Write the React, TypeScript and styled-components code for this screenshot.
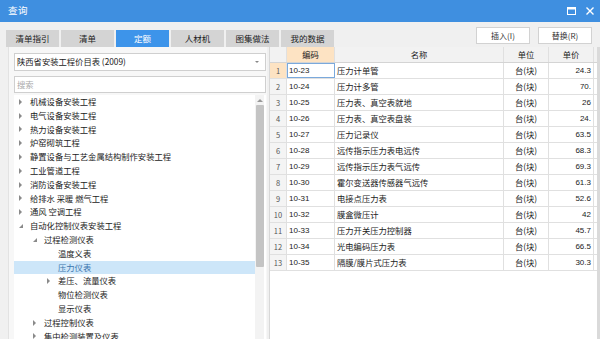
import * as React from 'react';
import styled, { createGlobalStyle } from 'styled-components';

const GlobalStyle = createGlobalStyle`
  html, body { margin: 0; padding: 0; background: #f0f0f0; }
  body {
    font-family: "Noto Sans CJK SC", "Liberation Sans", sans-serif;
    line-height: 1.2;
  }
`;

const tabs = ['清单指引', '清单', '定额', '人材机', '图集做法', '我的数据'];

type TreeItem = { label: string; level: number; arrow?: 'open' | 'closed'; selected?: boolean };

const tree: TreeItem[] = [
  { label: '机械设备安装工程', level: 0, arrow: 'closed' },
  { label: '电气设备安装工程', level: 0, arrow: 'closed' },
  { label: '热力设备安装工程', level: 0, arrow: 'closed' },
  { label: '炉窑砌筑工程', level: 0, arrow: 'closed' },
  { label: '静置设备与工艺金属结构制作安装工程', level: 0, arrow: 'closed' },
  { label: '工业管道工程', level: 0, arrow: 'closed' },
  { label: '消防设备安装工程', level: 0, arrow: 'closed' },
  { label: '给排水 采暖 燃气工程', level: 0, arrow: 'closed' },
  { label: '通风 空调工程', level: 0, arrow: 'closed' },
  { label: '自动化控制仪表安装工程', level: 0, arrow: 'open' },
  { label: '过程检测仪表', level: 1, arrow: 'open' },
  { label: '温度义表', level: 2 },
  { label: '压力仪表', level: 2, selected: true },
  { label: '差压、流量仪表', level: 2, arrow: 'closed' },
  { label: '物位检测仪表', level: 2 },
  { label: '显示仪表', level: 2 },
  { label: '过程控制仪表', level: 1, arrow: 'closed' },
  { label: '集中检测装置及仪表', level: 1, arrow: 'closed' },
];

const rows = [
  ['10-23', '压力计单管', '24.3'],
  ['10-24', '压力计多管', '70.'],
  ['10-25', '压力表、真空表就地', '26'],
  ['10-26', '压力表、真空表盘装', '24.'],
  ['10-27', '压力记录仪', '63.5'],
  ['10-28', '远传指示压力表电远传', '68.3'],
  ['10-29', '远传指示压力表气远传', '69.3'],
  ['10-30', '霍尔变送器传感器气远传', '61.3'],
  ['10-31', '电接点压力表', '52.6'],
  ['10-32', '膜盒微压计', '42'],
  ['10-33', '压力开关压力控制器', '45.7'],
  ['10-34', '光电编码压力表', '66.5'],
  ['10-35', '隔膜/膜片式压力表', '30.3'],
];

const cols = { num: 17, code: 48, name: 169, unit: 45, price: 45 };

const Window = styled.div`
  width: 600px;
  height: 339px;
  overflow: hidden;
  display: flex;
  flex-direction: column;
  background: #f0f0f0;
  color: #222;
`;

const TitleBar = styled.div`
  height: 22px;
  flex: none;
  display: flex;
  align-items: center;
  padding: 0 6px 0 8px;
  background: #3f8fe0;
  color: #fff;
  font-size: 9.5px;
`;

const TitleText = styled.span`
  flex: 1;
  letter-spacing: 0.5px;
`;

const TitleIcons = styled.div`
  display: flex;
  align-items: center;
  gap: 10px;
`;

const Toolbar = styled.div`
  height: 25px;
  flex: none;
  display: flex;
  align-items: flex-end;
  padding: 0 8px 0 6px;
`;

const Tab = styled.div<{ $active?: boolean }>`
  width: 53px;
  height: 17px;
  margin-right: 2px;
  display: flex;
  align-items: center;
  justify-content: center;
  font-size: 8.5px;
  background: ${(p) => (p.$active ? '#3d94ea' : '#d4d4d4')};
  color: ${(p) => (p.$active ? '#fff' : '#222')};
`;

const Buttons = styled.div`
  margin-left: auto;
  align-self: flex-start;
  margin-top: 5px;
  display: flex;
  gap: 8px;
`;

const Button = styled.div`
  width: 52px;
  height: 15px;
  display: flex;
  align-items: center;
  justify-content: center;
  background: #fff;
  border: 1px solid #d2d2d2;
  font-size: 8px;
  color: #333;
`;

const Content = styled.div`
  flex: 1;
  min-height: 0;
  display: flex;
  gap: 2px;
  padding-left: 8px;
`;

const LeftPanel = styled.div`
  width: 252px;
  flex: none;
  display: flex;
  flex-direction: column;
  padding: 6px 1px 0 5px;
  background: #f7f7f7;
  border-left: 1px solid #e2e2e2;
`;

const Select = styled.div`
  height: 16px;
  display: flex;
  align-items: center;
  padding: 0 6px 0 2px;
  background: #fff;
  border: 1px solid #cfcfcf;
  font-size: 8.3px;
`;

const SelectText = styled.span`
  flex: 1;
`;

const SelectCaret = styled.span`
  width: 0;
  height: 0;
  border-left: 2px solid transparent;
  border-right: 2px solid transparent;
  border-top: 2px solid #888;
`;

const Search = styled.div`
  height: 15px;
  margin-top: 5px;
  display: flex;
  align-items: center;
  padding-left: 2px;
  background: #fff;
  border: 1px solid #cfcfcf;
  font-size: 8.3px;
  color: #aaa;
`;

const TreeBox = styled.div`
  flex: 1;
  min-height: 0;
  margin-top: 2px;
  display: flex;
  background: #fff;
  overflow: hidden;
`;

const TreeList = styled.div`
  flex: 1;
`;

const TreeRow = styled.div<{ $level: number; $selected?: boolean }>`
  height: 13.8px;
  line-height: 13.8px;
  display: flex;
  align-items: center;
  padding-left: ${(p) => 5 + p.$level * 14}px;
  font-size: 8.3px;
  white-space: nowrap;
  background: ${(p) => (p.$selected ? '#cde6f9' : 'transparent')};
  color: ${(p) => (p.$selected ? '#3a74ad' : '#222')};
`;

const Arrow = styled.span`
  width: 11px;
  flex: none;
  display: flex;
  align-items: center;
`;

const ClosedArrow = styled.span`
  width: 0;
  height: 0;
  border-top: 3px solid transparent;
  border-bottom: 3px solid transparent;
  border-left: 3px solid #8a8a8a;
`;

const OpenArrow = styled.span`
  width: 0;
  height: 0;
  border-left: 4px solid transparent;
  border-bottom: 4px solid #8a8a8a;
`;

const ScrollTrack = styled.div`
  width: 9px;
  flex: none;
  margin-right: 2px;
  display: flex;
  flex-direction: column;
  align-items: center;
  background: #f3f3f3;
`;

const ScrollUp = styled.span`
  margin: 4px 0 3px;
  width: 0;
  height: 0;
  border-left: 3px solid transparent;
  border-right: 3px solid transparent;
  border-bottom: 3px solid #999;
`;

const ScrollThumb = styled.div`
  width: 8px;
  height: 162px;
  border-radius: 1px;
  background: #c4c4c4;
`;

const RightPanel = styled.div`
  flex: 1;
  min-width: 0;
  display: flex;
  background: #fff;
  overflow: hidden;
`;

const Grid = styled.div`
  width: 327px;
  flex: none;
  border-right: 3px solid #dadada;
  border-left: 1px solid #d8d8d8;
  overflow: hidden;
`;

const GridRow = styled.div`
  height: 16px;
  display: flex;
  border-bottom: 1px solid #e0e0e0;
  box-sizing: border-box;
`;

const Cell = styled.div<{
  $w: number;
  $align?: 'left' | 'center' | 'right';
  $bg?: string;
  $selected?: boolean;
  $small?: boolean;
}>`
  width: ${(p) => p.$w}px;
  flex: none;
  box-sizing: border-box;
  display: flex;
  align-items: center;
  justify-content: ${(p) =>
    p.$align === 'center' ? 'center' : p.$align === 'right' ? 'flex-end' : 'flex-start'};
  padding: 0 2px;
  border-right: 1px solid #e0e0e0;
  background: ${(p) => p.$bg || 'transparent'};
  outline: ${(p) => (p.$selected ? '1px solid #7aa9dc' : 'none')};
  outline-offset: -1px;
  font-size: ${(p) => (p.$small ? 7.5 : 8.3)}px;
  color: ${(p) => (p.$small ? '#555' : '#222')};
  white-space: nowrap;
  overflow: hidden;
`;

const HeaderRow = styled(GridRow)`
  background: #f2f2f2;
  border-bottom: 1px solid #d4d4d4;
`;

const NumText = styled.span`
  font-family: "Liberation Sans", "DejaVu Sans", sans-serif;
  font-size: 8px;
`;

function RestoreIcon() {
  return (
    <svg width="9" height="8" viewBox="0 0 9 8">
      <rect x="0.5" y="0.5" width="8" height="7" fill="none" stroke="#fff" strokeWidth="1" />
      <rect x="0.5" y="0.5" width="8" height="2" fill="#fff" />
    </svg>
  );
}

function CloseIcon() {
  return (
    <svg width="8" height="8" viewBox="0 0 8 8">
      <path d="M0.5 0.5 L7.5 7.5 M7.5 0.5 L0.5 7.5" stroke="#fff" strokeWidth="1.4" />
    </svg>
  );
}

export default function App() {
  return (
    <>
      <GlobalStyle />
      <Window>
        <TitleBar>
          <TitleText>查询</TitleText>
          <TitleIcons>
            <RestoreIcon />
            <CloseIcon />
          </TitleIcons>
        </TitleBar>

        <Toolbar>
          {tabs.map((t) => (
            <Tab key={t} $active={t === '定额'}>
              {t}
            </Tab>
          ))}
          <Buttons>
            <Button>插入(I)</Button>
            <Button>替换(R)</Button>
          </Buttons>
        </Toolbar>

        <Content>
          <LeftPanel>
            <Select>
              <SelectText>陕西省安装工程价目表 (2009)</SelectText>
              <SelectCaret />
            </Select>
            <Search>搜索</Search>
            <TreeBox>
              <TreeList>
                {tree.map((item, i) => (
                  <TreeRow key={i} $level={item.level} $selected={item.selected}>
                    <Arrow>
                      {item.arrow === 'closed' && <ClosedArrow />}
                      {item.arrow === 'open' && <OpenArrow />}
                    </Arrow>
                    {item.label}
                  </TreeRow>
                ))}
              </TreeList>
              <ScrollTrack>
                <ScrollUp />
                <ScrollThumb />
              </ScrollTrack>
            </TreeBox>
          </LeftPanel>

          <RightPanel>
            <Grid>
              <HeaderRow>
                <Cell $w={cols.num} />
                <Cell $w={cols.code} $align="center" $bg="#fde3c3">
                  编码
                </Cell>
                <Cell $w={cols.name} $align="center">
                  名称
                </Cell>
                <Cell $w={cols.unit} $align="center">
                  单位
                </Cell>
                <Cell $w={cols.price} $align="center">
                  单价
                </Cell>
              </HeaderRow>
              {rows.map(([code, name, price], i) => (
                <GridRow key={code}>
                  <Cell $w={cols.num} $align="center" $small $bg={i === 0 ? '#fde3c3' : '#f4f4f4'}>
                    {i + 1}
                  </Cell>
                  <Cell $w={cols.code} $selected={i === 0}>
                    <NumText>{code}</NumText>
                  </Cell>
                  <Cell $w={cols.name}>{name}</Cell>
                  <Cell $w={cols.unit} $align="center">
                    台(块)
                  </Cell>
                  <Cell $w={cols.price} $align="right">
                    <NumText>{price}</NumText>
                  </Cell>
                </GridRow>
              ))}
            </Grid>
          </RightPanel>
        </Content>
      </Window>
    </>
  );
}
